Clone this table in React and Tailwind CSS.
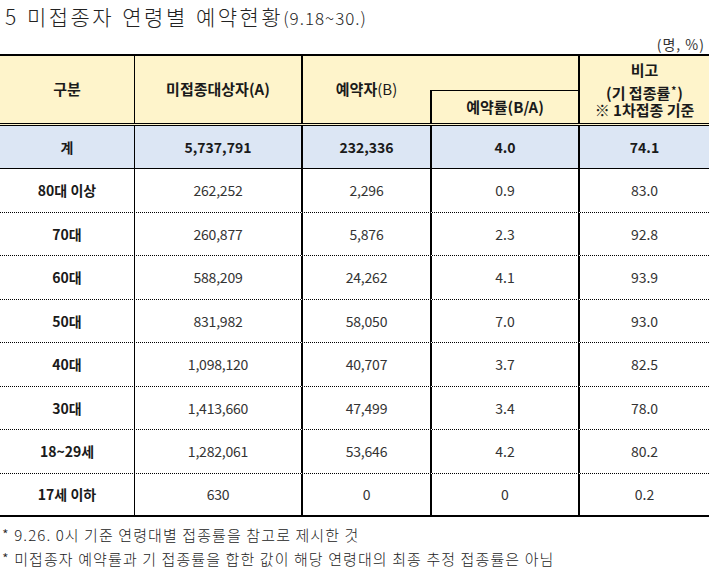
import React from "react";

const rows = [
  ["80대 이상", "262,252", "2,296", "0.9", "83.0"],
  ["70대", "260,877", "5,876", "2.3", "92.8"],
  ["60대", "588,209", "24,262", "4.1", "93.9"],
  ["50대", "831,982", "58,050", "7.0", "93.0"],
  ["40대", "1,098,120", "40,707", "3.7", "82.5"],
  ["30대", "1,413,660", "47,499", "3.4", "78.0"],
  ["18~29세", "1,282,061", "53,646", "4.2", "80.2"],
  ["17세 이하", "630", "0", "0", "0.2"],
];

const cols = "grid grid-cols-[134px_167px_129px_148px_131px]";

export default function App() {
  return (
    <div className="w-[709px] h-[575px] bg-white text-[#1a1a1a] font-['Noto_Sans_CJK_KR',sans-serif] overflow-hidden">
      {/* TITLE */}
      <div className="h-[34px] pl-[5px] pt-[1px] flex items-baseline font-light text-[#222]">
        <span className="text-[21px] tracking-[2.5px] [word-spacing:1px]">5 미접종자 연령별 예약현황</span>
        <span className="text-[17px] tracking-[1px]">(9.18~30.)</span>
      </div>
      <div className="h-[20px] pr-[4px] text-right text-[14px] leading-[20px] tracking-[1px] text-[#333]">(명, %)</div>

      {/* TABLE */}
      <div className="border-t-2 border-black">
        {/* HEADER */}
        <div className={`${cols} grid-rows-[34px_33px] bg-[#fef4cb] border-b-[3px] border-double border-black text-[15px] font-bold`}>
          <div className="row-span-2 flex items-center justify-center">구분</div>
          <div className="row-span-2 border-l border-black flex items-center justify-center">미접종대상자(A)</div>
          <div className="row-span-2 border-l-2 border-black flex items-center justify-center">
            예약자<span className="font-normal">(B)</span>
          </div>
          <div className="col-start-4 row-start-2 border-l-2 border-t border-black flex items-center justify-center">
            예약률(B/A)
          </div>
          <div className="col-start-5 row-start-1 row-span-2 border-l-2 border-black flex flex-col items-center justify-center">
            <span className="leading-[18px] mb-[5px]">비고</span>
            <p className="leading-[17px] text-center">
              (기 접종률<sup className="text-[10px] leading-none px-[1px]">*</sup>)
              <br />※ 1차접종 기준
            </p>
          </div>
        </div>

        {/* TOTAL ROW */}
        <div className={`${cols} h-[43px] bg-[#dce6f4] border-b border-black text-[14px] font-bold`}>
          <div className="flex items-center justify-center">계</div>
          <div className="border-l border-black flex items-center justify-center">5,737,791</div>
          <div className="border-l-2 border-black flex items-center justify-center">232,336</div>
          <div className="border-l-2 border-black flex items-center justify-center">4.0</div>
          <div className="border-l-2 border-black flex items-center justify-center">74.1</div>
        </div>

        {/* AGE ROWS */}
        {rows.map((r, i) => (
          <div
            key={i}
            className={`${cols} ${i % 2 === 0 ? "h-[44px]" : "h-[43px]"} text-[14px] ${
              i === rows.length - 1 ? "border-b-2 border-solid" : "border-b border-dotted"
            } border-black`}
          >
            <div className="flex items-center justify-center font-bold">{r[0]}</div>
            <div className="border-l border-solid border-black flex items-center justify-center text-[#333] tracking-[-0.2px]">{r[1]}</div>
            <div className="border-l-2 border-solid border-black flex items-center justify-center text-[#333] tracking-[-0.2px]">{r[2]}</div>
            <div className="border-l-2 border-solid border-black flex items-center justify-center text-[#333]">{r[3]}</div>
            <div className="border-l-2 border-solid border-black flex items-center justify-center text-[#333]">{r[4]}</div>
          </div>
        ))}
      </div>

      {/* FOOTNOTES */}
      <div className="pl-[2px] pt-[6px] text-[15px] leading-[24px] tracking-[1.1px] text-[#222] font-light">
        <p>* 9.26. 0시 기준 연령대별 접종률을 참고로 제시한 것</p>
        <p>* 미접종자 예약률과 기 접종률을 합한 값이 해당 연령대의 최종 추정 접종률은 아님</p>
      </div>
    </div>
  );
}
